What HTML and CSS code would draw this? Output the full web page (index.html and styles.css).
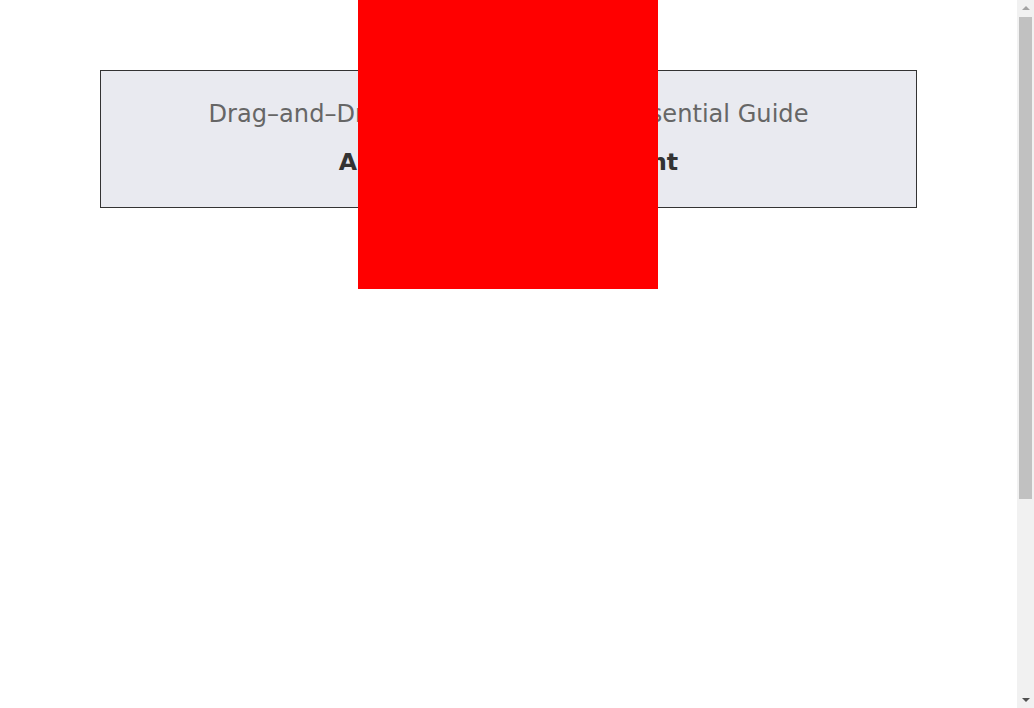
FILE: index.html
```html
<!DOCTYPE html>
<html lang="en">
<head>
<meta charset="utf-8">
<title>Drag-and-Drop Guide</title>
<link rel="stylesheet" href="styles.css">
</head>
<body>
  <div class="page">
    <header class="banner">
      <h1 class="title">Drag–and–Drop Site Builders: The Essential Guide</h1>
      <h2 class="subtitle">A Beginner’s Assessment</h2>
    </header>
    <div class="overlay"></div>
  </div>
  <div class="scrollbar" aria-hidden="true">
    <span class="arrow arrow-up"></span>
    <span class="thumb"></span>
    <span class="arrow arrow-down"></span>
  </div>
</body>
</html>
```

FILE: styles.css
```css
html, body {
  margin: 0;
  padding: 0;
  overflow: hidden;
}
body {
  background: #ffffff;
  font-family: "DejaVu Sans", "Liberation Sans", sans-serif;
}
.page {
  position: relative;
  margin-right: 17px;
  padding-top: 70px;
  height: 638px;
}
.banner {
  margin: 0 100px;
  background: #e9eaf0;
  border: 1px solid #333;
  padding: 27px 20px 29px;
  text-align: center;
}
.title {
  margin: 0;
  font-size: 24.1px;
  font-weight: normal;
  color: #666;
  line-height: 32px;
}
.subtitle {
  margin: 16px 0 0;
  font-size: 23.7px;
  font-weight: bold;
  color: #333;
  line-height: 32px;
}
.overlay {
  position: absolute;
  top: 0;
  left: calc(50% - 150.5px);
  width: 300px;
  height: 289px;
  background: #ff0000;
}
.scrollbar {
  position: fixed;
  top: 0;
  right: 0;
  width: 17px;
  height: 100%;
  background: #f1f1f1;
  display: flex;
  flex-direction: column;
  align-items: center;
}
.arrow {
  flex: none;
  width: 0;
  height: 0;
  border-left: 4px solid transparent;
  border-right: 4px solid transparent;
}
.arrow-up {
  margin: 6px 0 5px;
  border-bottom: 4px solid #a3a3a3;
}
.thumb {
  flex: none;
  width: 13px;
  height: 482px;
  margin-top: 2px;
  background: #c1c1c1;
}
.arrow-down {
  margin-top: auto;
  margin-bottom: 6px;
  border-top: 4px solid #505050;
}
```
